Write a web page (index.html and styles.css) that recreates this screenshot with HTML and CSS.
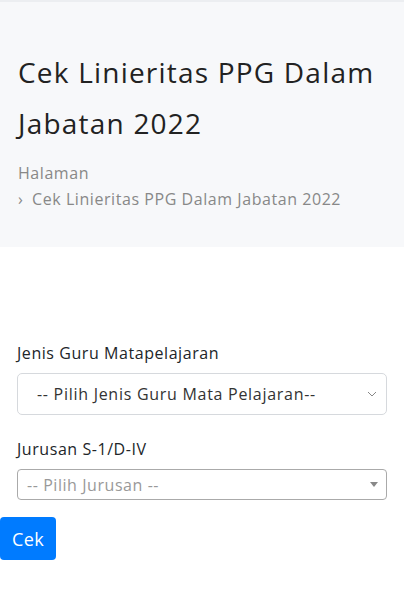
FILE: index.html
```html
<!DOCTYPE html>
<html>
<head>
  <link rel="stylesheet" href="styles.css">
</head>
<body>
  <div class="page-header">
    <h1 class="page-title">Cek Linieritas PPG Dalam Jabatan 2022</h1>
    <div class="breadcrumb">
      <div>Halaman</div>
      <div><span class="crumb-sep">›</span> Cek Linieritas PPG Dalam Jabatan 2022</div>
    </div>
  </div>

  <form class="check-form" onsubmit="return false;">
    <div class="form-group">
      <label for="jenis">Jenis Guru Matapelajaran</label>
      <div class="select-wrap">
        <select id="jenis" class="form-control">
          <option>-- Pilih Jenis Guru Mata Pelajaran--</option>
        </select>
        <svg class="select-chevron" width="10" height="6" viewBox="0 0 10 6">
          <path d="M1 1l4 4 4-4" fill="none" stroke="#888" stroke-width="1"/>
        </svg>
      </div>
    </div>
    <div class="form-group">
      <label>Jurusan S-1/D-IV</label>
      <div class="select2-box">
        <span class="select2-placeholder">-- Pilih Jurusan --</span>
        <span class="select2-arrow"></span>
      </div>
    </div>
    <button class="btn-cek" type="submit">Cek</button>
  </form>
</body>
</html>
```

FILE: styles.css
```css
body {
  margin: 0;
  padding: 0;
  font-family: "Open Sans", "Noto Sans", sans-serif;
  letter-spacing: 0.035em;
  background-color: #fff;
  color: #212529;
}

.page-header {
  border-top: 2px solid #eceef1;
  background-color: #f7f8fa;
  padding: 45px 18px 35px;
}

.page-title {
  margin: 0 0 11px;
  font-size: 28px;
  line-height: 51px;
  font-weight: 400;
  letter-spacing: 0.043em;
  color: #222;
}

.breadcrumb {
  font-size: 16px;
  line-height: 26px;
  color: #888;
}

.crumb-sep {
  margin-right: 4px;
}

.check-form {
  padding-top: 94px;
}

.form-group {
  padding: 0 17px;
  margin-bottom: 22px;
}

.form-group label {
  display: block;
  font-size: 16px;
  line-height: 24px;
  margin-bottom: 8px;
  color: #212529;
}

.select-wrap {
  position: relative;
}

.form-control {
  display: block;
  width: 100%;
  height: 42px;
  box-sizing: border-box;
  padding: 0 30px 0 19px;
  font-family: inherit;
  font-size: 16px;
  letter-spacing: 0.045em;
  color: #333;
  background-color: #fff;
  border: 1px solid #d6d9dd;
  border-radius: 5px;
  appearance: none;
  -webkit-appearance: none;
}

.select-chevron {
  position: absolute;
  right: 10px;
  top: 18px;
}

.select2-box {
  display: flex;
  align-items: center;
  justify-content: space-between;
  height: 31px;
  box-sizing: border-box;
  padding: 0 8px 0 9px;
  border: 1px solid #aaa;
  border-radius: 4px;
  background-color: #fff;
}

.select2-placeholder {
  font-size: 16px;
  color: #999;
}

.select2-arrow {
  width: 0;
  height: 0;
  border-left: 4px solid transparent;
  border-right: 4px solid transparent;
  border-top: 5px solid #888;
}

.btn-cek {
  display: block;
  margin-top: -5px;
  padding: 0 12px;
  height: 43px;
  font-family: inherit;
  font-size: 18px;
  letter-spacing: 0.02em;
  color: #fff;
  background-color: #007bff;
  border: none;
  border-radius: 4px;
  cursor: pointer;
}
```
